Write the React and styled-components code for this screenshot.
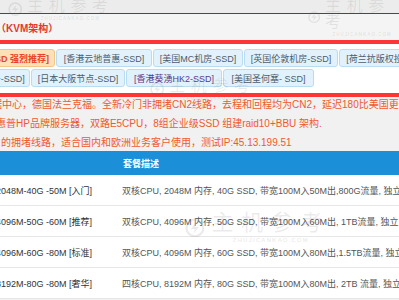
import React from 'react';
import styled, { createGlobalStyle } from 'styled-components';

const Global = createGlobalStyle`
  html, body {
    margin: 0;
    padding: 0;
    background: #f1f1f1;
    overflow: hidden;
  }
  body {
    font-family: "Liberation Sans", "Noto Sans CJK SC", sans-serif;
  }
`;

const Page = styled.div`
  position: relative;
  width: 399px;
  height: 300px;
  overflow: hidden;
  background: #f1f1f1;
`;

const TopStrip = styled.div`
  height: 13px;
  background: #ececec;
  border-bottom: 1px solid #34505f;
`;

const TitleBar = styled.div`
  height: 26px;
  display: flex;
  align-items: center;
  background: #f4f4f4;
  color: #e2392d;
  font-size: 10px;
  font-weight: bold;
  margin-left: -4px;
`;

const TabBox = styled.div`
  background: #fff;
  border-top: 4px solid #ff3535;
  border-bottom: 4px solid #ff3535;
  padding: 5px 0 6px;
  display: flex;
  flex-direction: column;
  gap: 2px;
`;

const TabRow = styled.div`
  display: flex;
  gap: 1px;
  margin-left: ${p => p.$shift}px;
  white-space: nowrap;
`;

const Tab = styled.div`
  flex: none;
  width: ${p => p.$w}px;
  height: 18px;
  box-sizing: border-box;
  display: flex;
  align-items: center;
  justify-content: center;
  border: 1px solid ${p => (p.$active ? '#f5c488' : '#b9dcf1')};
  border-radius: 3px;
  background: ${p => (p.$active ? '#fde1b6' : '#e2f2fc')};
  color: ${p => (p.$active ? '#e8442c' : p.$visited ? '#5a3b8d' : '#4e5c6c')};
  font-size: 9px;
  font-weight: ${p => (p.$active ? 'bold' : 'normal')};
`;

const Intro = styled.div`
  height: 54px;
  margin-top: 0;
  color: #f0592b;
  font-size: 10px;
  line-height: 19px;
  white-space: nowrap;
  overflow: hidden;
`;

const IntroLine = styled.div`
  margin-top: ${p => (p.$first ? -2 : 0)}px;
  text-indent: ${p => p.$indent}px;
`;

const Table = styled.div`
  background: #fff;
`;

const HeadRow = styled.div`
  display: grid;
  grid-template-columns: 123px 1fr;
  height: 24px;
  align-items: center;
  background: #1b8fd8;
  color: #fff;
  font-size: 9px;
  font-weight: bold;
`;

const Row = styled.div`
  display: grid;
  grid-template-columns: 122px 1fr;
  height: 30px;
  align-items: center;
  border-bottom: 1px solid #e6e6e6;
  font-size: 9px;
  white-space: nowrap;
  overflow: hidden;
`;

const Name = styled.div`
  color: #333;
  margin-left: -4px;
`;

const Desc = styled.div`
  color: #555;
  overflow: hidden;
`;

const Mark = styled.div`
  position: absolute;
  left: ${p => p.$x}px;
  top: ${p => p.$y}px;
  display: flex;
  align-items: center;
  gap: ${p => p.$s * 0.3}px;
  color: rgba(90, 90, 90, 0.12);
  pointer-events: none;
`;

const MarkText = styled.div`
  display: flex;
  flex-direction: column;
  align-items: center;
`;

const MarkTitle = styled.div`
  font-size: ${p => p.$s}px;
  letter-spacing: ${p => p.$s * 0.35}px;
  line-height: 1;
`;

const MarkSub = styled.div`
  font-size: ${p => p.$s * 0.28}px;
  letter-spacing: 1px;
  font-weight: bold;
  margin-top: 2px;
`;

const Watermark = ({ x, y, s }) => (
  <Mark $x={x} $y={y} $s={s}>
    <svg width={s * 0.9} height={s * 0.9} viewBox="0 0 20 20">
      <circle cx="10" cy="10" r="8.5" fill="none" stroke="currentColor" strokeWidth="2.2" />
      <path d="M11 4 L6 11 H10 L8.5 16 L14 9 H10 Z" fill="currentColor" />
    </svg>
    <MarkText>
      <MarkTitle $s={s}>主机参考</MarkTitle>
      <MarkSub $s={s}>ZHUJICANKAO.COM</MarkSub>
    </MarkText>
  </Mark>
);

const row1 = [
  { t: '[德国法兰克福CN2-SSD 强烈推荐]', w: 150, active: true },
  { t: '[香港云地普惠-SSD]', w: 96 },
  { t: '[美国MC机房-SSD]', w: 90 },
  { t: '[英国伦敦机房-SSD]', w: 94 },
  { t: '[荷兰抗版权投诉-SSD]', w: 104 },
];

const row2 = [
  { t: '[荷兰阿姆斯特丹-SSD]', w: 100 },
  { t: '[日本大阪节点-SSD]', w: 94 },
  { t: '[香港葵湧HK2-SSD]', w: 96, visited: true },
  { t: '[美国圣何塞- SSD]', w: 91 },
];

const plans = [
  ['2048M-40G -50M [入门]', '双核CPU, 2048M 内存, 40G SSD, 带宽100M入50M出,800G流量, 独立IP一个'],
  ['4096M-50G -60M [推荐]', '双核CPU, 4096M 内存, 50G SSD, 带宽100M入60M出, 1TB流量, 独立IP一个'],
  ['4096M-60G -80M [标准]', '双核CPU, 4096M 内存, 60G SSD, 带宽100M入80M出,1.5TB流量, 独立IP一个'],
  ['8192M-80G -80M [奢华]', '四核CPU, 8192M 内存, 80G SSD, 带宽100M入80M出, 2TB 流量, 独立IP一个'],
];

export default function App() {
  return (
    <Page>
      <Global />
      <TopStrip />
      <TitleBar>（KVM架构）</TitleBar>
      <TabBox>
        <TabRow $shift={-95}>
          {row1.map(r => (
            <Tab key={r.t} $w={r.w} $active={r.active}>{r.t}</Tab>
          ))}
        </TabRow>
        <TabRow $shift={-70}>
          {row2.map(r => (
            <Tab key={r.t} $w={r.w} $visited={r.visited}>{r.t}</Tab>
          ))}
        </TabRow>
      </TabBox>
      <Intro>
        <IntroLine $first $indent={-18}>数据中心，德国法兰克福。全新冷门非拥堵CN2线路，去程和回程均为CN2，延迟180比美国更低</IntroLine>
        <IntroLine $indent={-24}>采用惠普HP品牌服务器，双路E5CPU，8组企业级SSD 组建raid10+BBU 架构.</IntroLine>
        <IntroLine $indent={1}>的拥堵线路，适合国内和欧洲业务客户使用，测试IP:45.13.199.51</IntroLine>
      </Intro>
      <Table>
        <HeadRow>
          <div />
          <div>套餐描述</div>
        </HeadRow>
        {plans.map(p => (
          <Row key={p[0]}>
            <Name>{p[0]}</Name>
            <Desc>{p[1]}</Desc>
          </Row>
        ))}
      </Table>
      <Watermark x={8} y={-2} s={16} />
      <Watermark x={308} y={-2} s={16} />
      <Watermark x={150} y={78} s={16} />
      <Watermark x={185} y={212} s={22} />
    </Page>
  );
}
